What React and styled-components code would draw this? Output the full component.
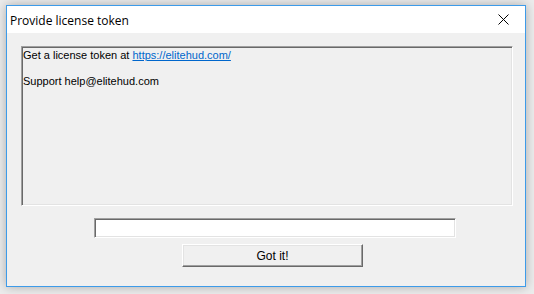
import styled, {createGlobalStyle} from 'styled-components'

const Global = createGlobalStyle`
  html, body {
    margin: 0;
    padding: 0;
    background: #ececec;
    width: 534px;
    height: 294px;
    overflow: hidden;
  }
`

const Screen = styled.div`
  padding: 5px 0 0 6px;
`

const Window = styled.div`
  width: 518px;
  height: 280px;
  border: 1px solid #3d9be9;
  background: #f0f0f0;
  box-shadow: 0 0 10px rgba(0, 0, 0, 0.28);
  display: flex;
  flex-direction: column;
`

const TitleBar = styled.div`
  height: 27px;
  background: #fff;
  display: flex;
  align-items: center;
  justify-content: space-between;
  padding: 0 0 0 3px;
  font-family: "Open Sans", "Liberation Sans", sans-serif;
  font-size: 12px;
  color: #000;
`

const Title = styled.span`
  padding-top: 1px;
`

const CloseButton = styled.div`
  width: 46px;
  height: 27px;
  display: flex;
  align-items: center;
  justify-content: center;
  margin-right: -1px;
`

const Body = styled.div`
  flex: 1;
  padding: 13px 12px 0 14px;
  display: flex;
  flex-direction: column;
  font-family: "Liberation Sans", Arial, sans-serif;
  font-size: 11px;
  color: #000;
`

const InfoBox = styled.div`
  height: 153px;
  border: 1px solid;
  border-color: #a0a0a0 #fff #fff #a0a0a0;
  box-shadow: inset 1px 1px #696969, inset -1px -1px #e3e3e3;
  padding: 2px 2px 3px 1px;
  line-height: 13px;
`

const Line = styled.p`
  margin: 0 0 ${p => p.$gap || 0}px 0;
`

const Link = styled.a`
  color: #0066cc;
  text-decoration: underline;
`

const TokenInput = styled.input`
  box-sizing: border-box;
  margin: 12px 0 0 73px;
  width: 362px;
  height: 20px;
  border: 1px solid;
  border-color: #a0a0a0 #fff #fff #a0a0a0;
  box-shadow: inset 1px 1px #696969, inset -1px -1px #e3e3e3;
  background: #fff;
  outline: none;
  padding: 0 3px;
  font: inherit;
`

const Button = styled.button`
  box-sizing: border-box;
  margin: 6px 0 0 161px;
  width: 181px;
  height: 23px;
  border: 1px solid;
  border-color: #fff #696969 #696969 #fff;
  box-shadow: inset -1px -1px #a0a0a0, inset 1px 1px #e3e3e3;
  background: #f0f0f0;
  font-family: "Liberation Sans", Arial, sans-serif;
  font-size: 12px;
  color: #000;
  padding: 0;
`

export default function App() {
  return (
    <Screen>
      <Global />
      <Window>
        <TitleBar>
          <Title>Provide license token</Title>
          <CloseButton>
            <svg width="11" height="11" viewBox="0 0 11 11">
              <path d="M0.5 0.5 L10.5 10.5 M10.5 0.5 L0.5 10.5" stroke="#000" strokeWidth="1" fill="none" />
            </svg>
          </CloseButton>
        </TitleBar>
        <Body>
          <InfoBox>
            <Line $gap={13}>
              Get a license token at <Link href="#">https://elitehud.com/</Link>
            </Line>
            <Line>Support help@elitehud.com</Line>
          </InfoBox>
          <TokenInput type="text" />
          <Button>Got it!</Button>
        </Body>
      </Window>
    </Screen>
  )
}
